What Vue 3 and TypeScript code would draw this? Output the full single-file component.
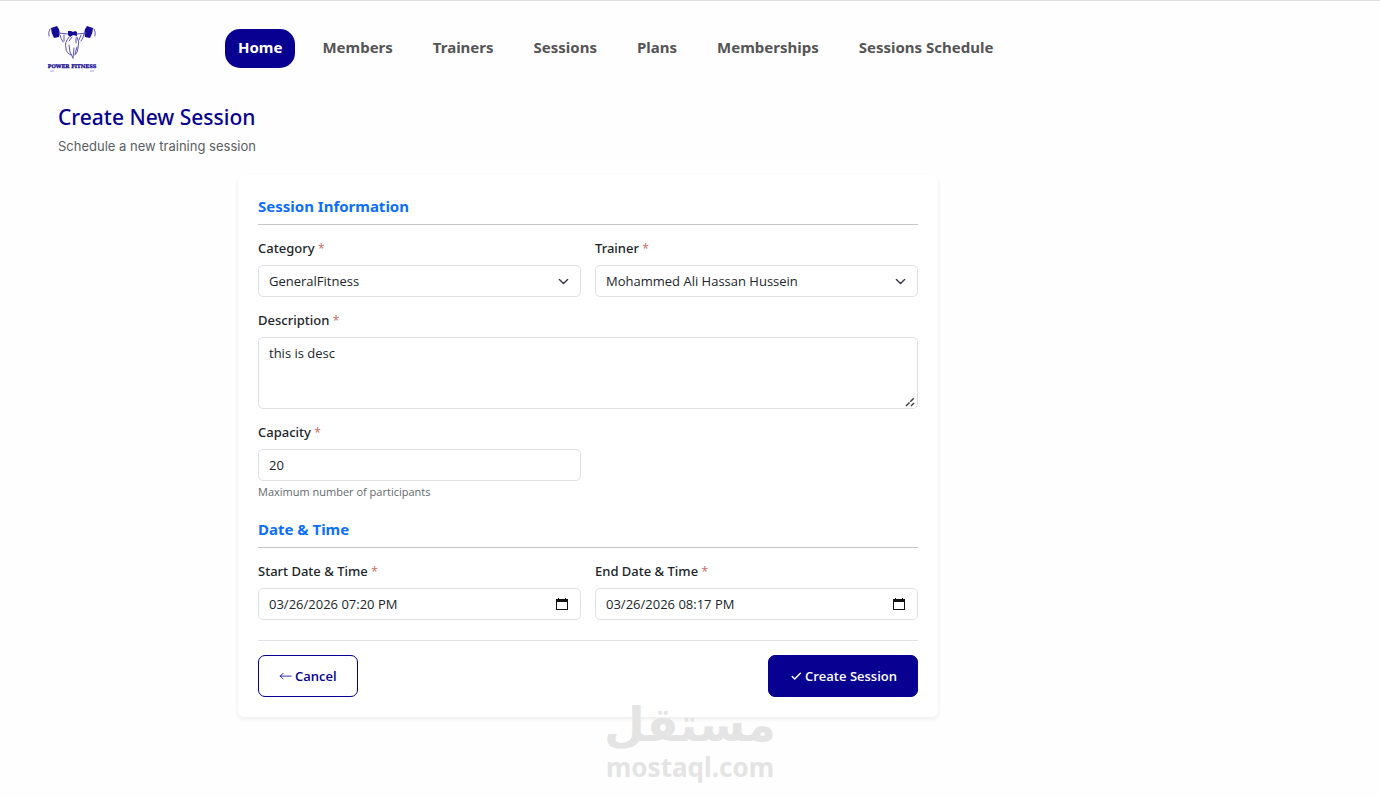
<script setup lang="ts">
import { ref } from 'vue'

interface NavItem {
  label: string
  active?: boolean
}

const navItems: NavItem[] = [
  { label: 'Home', active: true },
  { label: 'Members' },
  { label: 'Trainers' },
  { label: 'Sessions' },
  { label: 'Plans' },
  { label: 'Memberships' },
  { label: 'Sessions Schedule' },
]

const category = ref('GeneralFitness')
const trainer = ref('Mohammed Ali Hassan Hussein')
const description = ref('this is desc')
const capacity = ref(20)
const start = ref('03/26/2026 07:20 PM')
const end = ref('03/26/2026 08:17 PM')
</script>

<template>
  <div class="page">
    <header class="topbar">
      <a class="brand" href="#" aria-label="Power Fitness">
        <svg width="54" height="50" viewBox="0 0 54 50" aria-hidden="true">
          <g fill="#160c96">
            <path d="M6 5 L12 3 Q16 8 14 14 L9 15 Q6 10 6 5Z" />
            <path d="M48 5 L42 3 Q38 8 40 14 L45 15 Q48 10 48 5Z" />
            <path d="M23 8 L26 8 L28 9 L30 8 L32 9 L32 13 L28 12 L25 14 L23 12Z" />
          </g>
          <g fill="none" stroke="#5a54b8" stroke-width="1" stroke-linecap="round">
            <path d="M5 6 Q3 9 4 13 M49 6 Q51 9 50 13" />
            <path d="M14 10 L23 11 M32 11 L41 10" />
            <path d="M15 12 Q16 16 18 19 M39 11 Q38 16 36 18 M19 12 V18 M36 12 L34 17" />
            <path d="M24 14 Q19 20 21 25 Q21 30 26 32 M32 14 Q35 19 33 25 Q33 29 30 32" />
            <path d="M27 14 L24 18 M24 22 L25 29 L28 35 M31 15 L31 20 M29 25 L28 35 M32 24 L30 31" />
          </g>
          <text x="27" y="45" text-anchor="middle" class="brand-text">POWER FITNESS</text>
          <path d="M5 48h4M45 48h4" stroke="#aaa6dd" />
        </svg>
      </a>
      <nav class="nav" aria-label="Main">
        <a
          v-for="item in navItems"
          :key="item.label"
          href="#"
          class="nav-link"
          :class="{ active: item.active }"
          >{{ item.label }}</a
        >
      </nav>
    </header>

    <main class="content">
      <h1 class="title">Create New Session</h1>
      <p class="subtitle">Schedule a new training session</p>

      <form class="card" @submit.prevent>
        <h2 class="section">Session Information</h2>
        <div class="row">
          <div class="field">
            <label for="category">Category <span class="req">*</span></label>
            <div class="overlay">
              <select id="category" v-model="category" class="control">
                <option>GeneralFitness</option>
              </select>
              <svg class="chevron" viewBox="0 0 16 16" aria-hidden="true">
                <path d="m2 5 6 6 6-6" />
              </svg>
            </div>
          </div>
          <div class="field">
            <label for="trainer">Trainer <span class="req">*</span></label>
            <div class="overlay">
              <select id="trainer" v-model="trainer" class="control">
                <option>Mohammed Ali Hassan Hussein</option>
              </select>
              <svg class="chevron" viewBox="0 0 16 16" aria-hidden="true">
                <path d="m2 5 6 6 6-6" />
              </svg>
            </div>
          </div>
        </div>
        <div class="field">
          <label for="description">Description <span class="req">*</span></label>
          <textarea id="description" v-model="description" class="control area"></textarea>
        </div>
        <div class="row">
          <div class="field">
            <label for="capacity">Capacity <span class="req">*</span></label>
            <input id="capacity" v-model="capacity" type="number" class="control" />
            <small class="help">Maximum number of participants</small>
          </div>
        </div>

        <h2 class="section second">Date &amp; Time</h2>
        <div class="row">
          <div class="field">
            <label for="start">Start Date &amp; Time <span class="req">*</span></label>
            <div class="overlay">
              <input id="start" v-model="start" type="text" class="control" />
              <button type="button" class="picker" aria-label="Pick start date">
                <svg width="12" height="12" viewBox="0 0 12 12" aria-hidden="true">
                  <path d="M0 1h2V0h1v1h6V0h1v1h2v11H0zM1 4v7h10V4z" fill-rule="evenodd" />
                </svg>
              </button>
            </div>
          </div>
          <div class="field">
            <label for="end">End Date &amp; Time <span class="req">*</span></label>
            <div class="overlay">
              <input id="end" v-model="end" type="text" class="control" />
              <button type="button" class="picker" aria-label="Pick end date">
                <svg width="12" height="12" viewBox="0 0 12 12" aria-hidden="true">
                  <path d="M0 1h2V0h1v1h6V0h1v1h2v11H0zM1 4v7h10V4z" fill-rule="evenodd" />
                </svg>
              </button>
            </div>
          </div>
        </div>

        <div class="actions">
          <button type="button" class="btn outline">
            <svg width="13" height="13" viewBox="0 0 16 16" aria-hidden="true">
              <path d="M15 7.5H1.5M5 4 1.5 7.5 5 11" />
            </svg>
            Cancel
          </button>
          <button type="submit" class="btn solid">
            <svg width="13" height="13" viewBox="0 0 16 16" aria-hidden="true">
              <path d="m4 8 3 3 7-7" stroke-width="1.8" />
            </svg>
            Create Session
          </button>
        </div>
      </form>
    </main>

    <div class="watermark" aria-hidden="true">
      <span class="mark-ar" lang="ar" dir="rtl">مستقل</span>
      <span class="mark-en">mostaql.com</span>
    </div>
  </div>
</template>

<style>
body {
  margin: 0;
  background: #fefefe;
}
</style>

<style scoped>
.page {
  position: relative;
  box-sizing: border-box;
  min-height: 100vh;
  border-top: 1px solid #dfdfdf;
  font-family: 'Open Sans', 'Noto Sans', sans-serif;
  font-size: 13px;
  color: #212529;
}
.topbar {
  display: flex;
  align-items: center;
  padding: 22px 45px;
}
.brand {
  display: block;
  flex: none;
  width: 54px;
  height: 50px;
  margin-right: 126px;
}
.brand-text {
  font: bold 5px 'DejaVu Serif', serif;
  fill: #160c96;
  stroke: #160c96;
  stroke-width: 0.3;
}
.nav {
  display: flex;
  gap: 14px;
}
.nav-link {
  padding: 7px 13px 9px;
  border-radius: 15px;
  color: #555;
  font-family: 'Noto Sans', sans-serif;
  font-size: 15px;
  line-height: 23px;
  font-weight: 700;
  white-space: nowrap;
  text-decoration: none;
}
.nav-link.active {
  background: #070091;
  color: #fff;
}
.content {
  max-width: 1060px;
  padding: 6px 58px 79px;
}
.title {
  margin: 0;
  color: #070091;
  font-family: 'Noto Sans', sans-serif;
  font-size: 21px;
  line-height: 32px;
  font-weight: 500;
}
.subtitle {
  margin: 3px 0 19px;
  color: #5c5f63;
  font-family: Inter, sans-serif;
  font-size: 13px;
  line-height: 20px;
}
.card {
  box-sizing: border-box;
  max-width: 700px;
  margin: 0 auto;
  padding: 20px;
  border-radius: 6px;
  background: #fff;
  box-shadow: 0 2px 4px rgba(0, 0, 0, 0.075);
}
.section {
  margin: 0 0 13px;
  padding-bottom: 7px;
  border-bottom: 1px solid #c4c5c7;
  color: #0d6efd;
  font-family: 'Noto Sans', sans-serif;
  font-size: 15px;
  line-height: 22px;
  font-weight: 700;
}
.section.second {
  margin-top: 17px;
}
.row {
  display: grid;
  grid-template-columns: 1fr 1fr;
  gap: 14px;
}
.field {
  display: flex;
  flex-direction: column;
  min-width: 0;
}
.row + .field,
.field + .row {
  margin-top: 13px;
}
label {
  margin-bottom: 7px;
  font-family: 'Noto Sans', sans-serif;
  line-height: 20px;
  font-weight: 500;
}
.req {
  color: #c46a62;
  font-family: 'Open Sans', sans-serif;
  font-size: 12px;
  line-height: 12px;
  font-weight: 400;
}
.control {
  box-sizing: border-box;
  width: 100%;
  height: 32px;
  margin: 0;
  padding: 5px 10px;
  border: 1px solid #dee2e6;
  border-radius: 5px;
  background: #fff;
  color: #212529;
  font: inherit;
  line-height: 20px;
}
select.control {
  appearance: none;
}
input[type='number'] {
  appearance: textfield;
}
.area {
  height: 72px;
  resize: vertical;
}
.area::-webkit-resizer {
  background: url("data:image/svg+xml,%3Csvg xmlns='http://www.w3.org/2000/svg' width='15' height='15'%3E%3Cpath d='M4 13 12 5M9 13l3-3' stroke='%23444' stroke-width='1.5' stroke-dasharray='5 1'/%3E%3C/svg%3E")
    no-repeat right bottom;
}
.overlay {
  display: grid;
  align-items: center;
}
.overlay > * {
  grid-area: 1 / 1;
}
.chevron {
  width: 11px;
  height: 11px;
  margin-right: 12px;
  justify-self: end;
  fill: none;
  stroke: #343a40;
  stroke-width: 2;
  stroke-linecap: round;
  stroke-linejoin: round;
  pointer-events: none;
}
.picker {
  display: flex;
  justify-self: end;
  margin-right: 13px;
  padding: 0;
  border: 0;
  background: none;
}
.picker svg {
  fill: #111;
}
.help {
  margin-top: 2px;
  color: #65696d;
  font-size: 11px;
  line-height: 18px;
}
.actions {
  display: flex;
  justify-content: space-between;
  margin-top: 20px;
  padding-top: 14px;
  border-top: 1px solid #dee2e6;
}
.btn {
  display: flex;
  align-items: center;
  gap: 3px;
  height: 42px;
  padding: 0 20px;
  border: 1px solid #070091;
  border-radius: 7px;
  font: inherit;
  font-weight: 600;
}
.btn svg {
  fill: none;
  stroke: currentColor;
  stroke-linecap: round;
  stroke-linejoin: round;
}
.outline {
  background: #fff;
  color: #070091;
}
.solid {
  background: #070091;
  color: #fff;
}
.watermark {
  position: absolute;
  left: 50%;
  bottom: 15px;
  display: flex;
  flex-direction: column;
  align-items: center;
  transform: translateX(-50%);
  color: #e4e4e4;
  font-weight: 700;
  pointer-events: none;
}
.mark-ar {
  font-family: 'DejaVu Sans', sans-serif;
  font-size: 47px;
  line-height: 54px;
}
.mark-en {
  font-family: 'Noto Sans', sans-serif;
  font-size: 26px;
  line-height: 30px;
}
</style>
